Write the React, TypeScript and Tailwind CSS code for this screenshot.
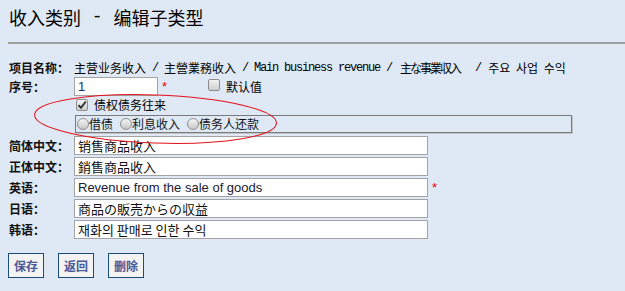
import React from "react";

const cjk = "font-['SimSun','Noto_Sans_CJK_SC',sans-serif]";

function Label({ children }: { children: React.ReactNode }) {
  return (
    <div className="w-[65px] shrink-0 text-[12px] font-bold leading-[14px] text-[#111]">{children}</div>
  );
}

function TextField({ value, latin }: { value: string; latin?: boolean }) {
  return (
    <div
      className={`h-[19px] w-[354px] border border-[#a3a3a3] bg-white pl-[3px] flex items-center ${
        latin ? "font-['Liberation_Sans',sans-serif] text-[13px] text-[#1a1a2e]" : "text-[13px] text-[#111]"
      } leading-[15px] whitespace-nowrap overflow-hidden`}
    >
      {value}
    </div>
  );
}

function Box({ checked }: { checked?: boolean }) {
  return (
    <div className="w-[12px] h-[12px] rounded-[2px] border border-[#8e8e8e] bg-gradient-to-b from-[#f2f2f2] to-[#cfcfcf] relative">
      {checked && (
        <svg width="10" height="10" viewBox="0 0 10 10" className="absolute left-0 top-0">
          <path d="M1.5 5.2 L4 7.8 L8.8 1.5" stroke="#333" strokeWidth="2" fill="none" />
        </svg>
      )}
    </div>
  );
}

function Radio({ label }: { label: string }) {
  return (
    <div className="flex items-center">
      <div className="w-[12px] h-[12px] rounded-full border border-[#8e8e8e] bg-gradient-to-b from-[#f4f4f4] to-[#c8c8c8]" />
      <span className="text-[12px] leading-[14px] text-[#111]">{label}</span>
    </div>
  );
}

function Btn({ children }: { children: React.ReactNode }) {
  return (
    <div className="h-[25px] w-[36px] border border-[#1c4b7d] bg-[#f3f3f3] flex items-center justify-center text-[12px] leading-[14px] font-bold text-[#4a5897]">
      {children}
    </div>
  );
}

const mono = "font-['Liberation_Mono',monospace] text-[12px] tracking-[-1.2px] whitespace-pre";

function Row({ h, className, children }: { h: string; className?: string; children: React.ReactNode }) {
  return <div className={`flex items-center overflow-visible ${h} ${className ?? ""}`}>{children}</div>;
}

export default function App() {
  return (
    <div className={`relative w-full h-[291px] bg-[#dfe9f5] text-black ${cjk}`}>
      <div className="h-[34px] pl-[9px] pt-[7px]">
        <div className="h-[20px] flex items-center text-[18px] leading-[20px] whitespace-pre">
          <span>收入类别</span>
          <span className="font-['Liberation_Mono',monospace] text-[18px]"> - </span>
          <span>编辑子类型</span>
        </div>
      </div>
      <div className="ml-[8px] mt-[8px] h-[2px] bg-[#a0a0a0]" />

      <div className="pl-[9px] pt-[17px]">
        {/* 项目名称 */}
        <Row h="h-[14px]">
          <Label>项目名称：</Label>
          <div className="text-[12px] leading-[14px] whitespace-nowrap flex items-center h-[14px]">
            <span>主营业务收入</span>
            <span className={mono}> / </span>
            <span>主營業務收入</span>
            <span className={mono}> / Main business revenue / </span>
            <span className="tracking-[-2px] ml-[2px] mr-[9px]">主な事業収入</span>
            <span className={mono}> / </span>
            <span className="font-['Noto_Sans_CJK_KR',sans-serif] whitespace-pre ml-[1px] [word-spacing:3px]">주요 사업 수익</span>
          </div>
        </Row>

        {/* 序号 */}
        <Row h="h-[19px]" className="mt-[2px]">
          <Label>序号：</Label>
          <div className="h-[19px] w-[84px] border border-[#a3a3a3] bg-white pl-[3px] flex items-center font-['Liberation_Sans',sans-serif] text-[13px] leading-[15px] text-[#1a2a6e]">
            1
          </div>
          <span className="ml-[4px] text-[13px] leading-[13px] text-[#e00] font-['Liberation_Sans',sans-serif]">*</span>
          <div className="ml-[41px] -mt-[4px]">
            <Box />
          </div>
          <span className="ml-[6px] text-[12px] leading-[14px]">默认值</span>
        </Row>

        {/* checkbox row */}
        <Row h="h-[16px]" className="mt-[1px] pl-[67px]">
          <Box checked />
          <span className="ml-[6px] text-[12px] leading-[14px]">债权债务往来</span>
        </Row>

        {/* fieldset */}
        <div className="mt-[2px] ml-[66px] w-[497px] h-[18px] border border-[#7a7a7a] shadow-[1px_1px_0_#c4c4c4] flex items-center pl-[1px]">
          <Radio label="借债" />
          <div className="ml-[7px]"><Radio label="利息收入" /></div>
          <div className="ml-[7px]"><Radio label="债务人还款" /></div>
        </div>

        <div className="mt-[3px]">
          <Row h="h-[19px]">
            <Label>简体中文：</Label>
            <TextField value="销售商品收入" />
          </Row>
          <Row h="h-[19px]" className="mt-[2px]">
            <Label>正体中文：</Label>
            <TextField value="銷售商品收入" />
          </Row>
          <Row h="h-[19px]" className="mt-[2px]">
            <Label>英语：</Label>
            <TextField value="Revenue from the sale of goods" latin />
            <span className="ml-[4px] text-[13px] leading-[13px] text-[#e00] font-['Liberation_Sans',sans-serif]">*</span>
          </Row>
          <Row h="h-[19px]" className="mt-[2px]">
            <Label>日语：</Label>
            <TextField value="商品の販売からの収益" />
          </Row>
          <Row h="h-[19px]" className="mt-[2px]">
            <Label>韩语：</Label>
            <TextField value="재화의 판매로 인한 수익" />
          </Row>
        </div>

        <div className="mt-[14px] flex gap-[14px] -ml-[1px]">
          <Btn>保存</Btn>
          <Btn>返回</Btn>
          <Btn>删除</Btn>
        </div>
      </div>

      <svg className="absolute left-0 top-0 pointer-events-none" width="625" height="291">
        <ellipse cx="155.5" cy="119" rx="121" ry="24" transform="rotate(2 155.5 119)" fill="none" stroke="#e3121b" strokeWidth="1" />
      </svg>
    </div>
  );
}
